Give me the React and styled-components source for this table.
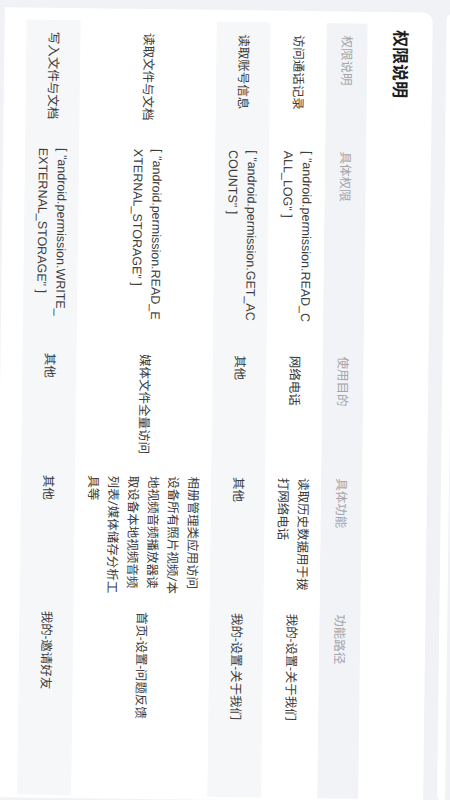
import React from "react";
import styled, { createGlobalStyle } from "styled-components";

const GlobalStyle = createGlobalStyle`
  body {
    margin: 0;
    background: #f1f2f6;
    overflow: hidden;
    font-family: Roboto, "Noto Sans CJK SC", sans-serif;
  }
`;

const Viewport = styled.div`
  width: 450px;
  height: 800px;
  display: flex;
  align-items: center;
  justify-content: center;
  overflow: hidden;
  background: #f1f2f6;
`;

/* the screen was shot sideways, so the landscape page is turned a quarter */
const Stage = styled.div`
  flex: none;
  width: 800px;
  height: 450px;
  display: flex;
  flex-direction: column;
  padding-left: 10px;
  box-sizing: border-box;
  background: #f1f2f6;
  transform: rotate(90.7deg);
`;

const TopBar = styled.div`
  height: 8px;
  background: #fff;
  border-radius: 0 0 10px 10px;
`;

const Card = styled.div`
  flex: 1;
  margin-top: 14px;
  background: #fff;
  border-radius: 10px 0 0 0;
  padding: 19px 0 0 12px;
`;

const Title = styled.div`
  font-size: 17px;
  font-weight: 700;
  line-height: 24px;
  padding-left: 6px;
  color: #1e1e1e;
  font-family: "Noto Sans CJK SC", sans-serif;
`;

const Table = styled.div`
  margin-top: 22px;
  width: 775px;
  display: flex;
  flex-direction: column;
`;

const Row = styled.div`
  display: grid;
  grid-template-columns: 116px 205px 122px 136px 196px;
  background: ${(p) => (p.$head ? "#f2f3f6" : p.$odd ? "#f6f7f9" : "#fff")};
`;

const Cell = styled.div`
  display: flex;
  align-items: center;
  padding: ${(p) => (p.$head ? "10.5px 4px 10.5px 12px" : "8px 4px 8px 12px")};
  font-size: 12.5px;
  line-height: 20px;
  color: ${(p) => (p.$head ? "#a3a5ab" : "#3c3c3c")};
`;

const Code = styled.div`
  max-width: 174px;
  word-break: break-all;
  line-height: 19px;
  font-family: "Liberation Sans", "Noto Sans CJK SC", sans-serif;
`;

const heads = ["权限说明", "具体权限", "使用目的", "具体功能", "功能路径"];

const rows = [
  {
    name: "访问通话记录",
    perm: '[ "android.permission.READ_CALL_LOG" ]',
    use: "网络电话",
    feature: "读取历史数据用于拨打网络电话",
    path: "我的-设置-关于我们",
  },
  {
    name: "读取账号信息",
    perm: '[ "android.permission.GET_ACCOUNTS" ]',
    use: "其他",
    feature: "其他",
    path: "我的-设置-关于我们",
  },
  {
    name: "读取文件与文档",
    perm: '[ "android.permission.READ_EXTERNAL_STORAGE" ]',
    use: "媒体文件全量访问",
    feature:
      "相册管理类应用访问设备所有照片视频/本地视频音频播放器读取设备本地视频音频列表/媒体储存分析工具等",
    path: "首页-设置-问题反馈",
  },
  {
    name: "写入文件与文档",
    perm: '[ "android.permission.WRITE_EXTERNAL_STORAGE" ]',
    use: "其他",
    feature: "其他",
    path: "我的-邀请好友",
  },
];

export default function App() {
  return (
    <Viewport>
      <GlobalStyle />
      <Stage>
        <TopBar />
        <Card>
          <Title>权限说明</Title>
          <Table>
            <Row $head>
              {heads.map((h) => (
                <Cell $head key={h}>
                  {h}
                </Cell>
              ))}
            </Row>
            {rows.map((r, i) => (
              <Row key={r.name} $odd={i % 2 === 1}>
                <Cell>{r.name}</Cell>
                <Cell>
                  <Code>{r.perm}</Code>
                </Cell>
                <Cell>{r.use}</Cell>
                <Cell>{r.feature}</Cell>
                <Cell>{r.path}</Cell>
              </Row>
            ))}
          </Table>
        </Card>
      </Stage>
    </Viewport>
  );
}
